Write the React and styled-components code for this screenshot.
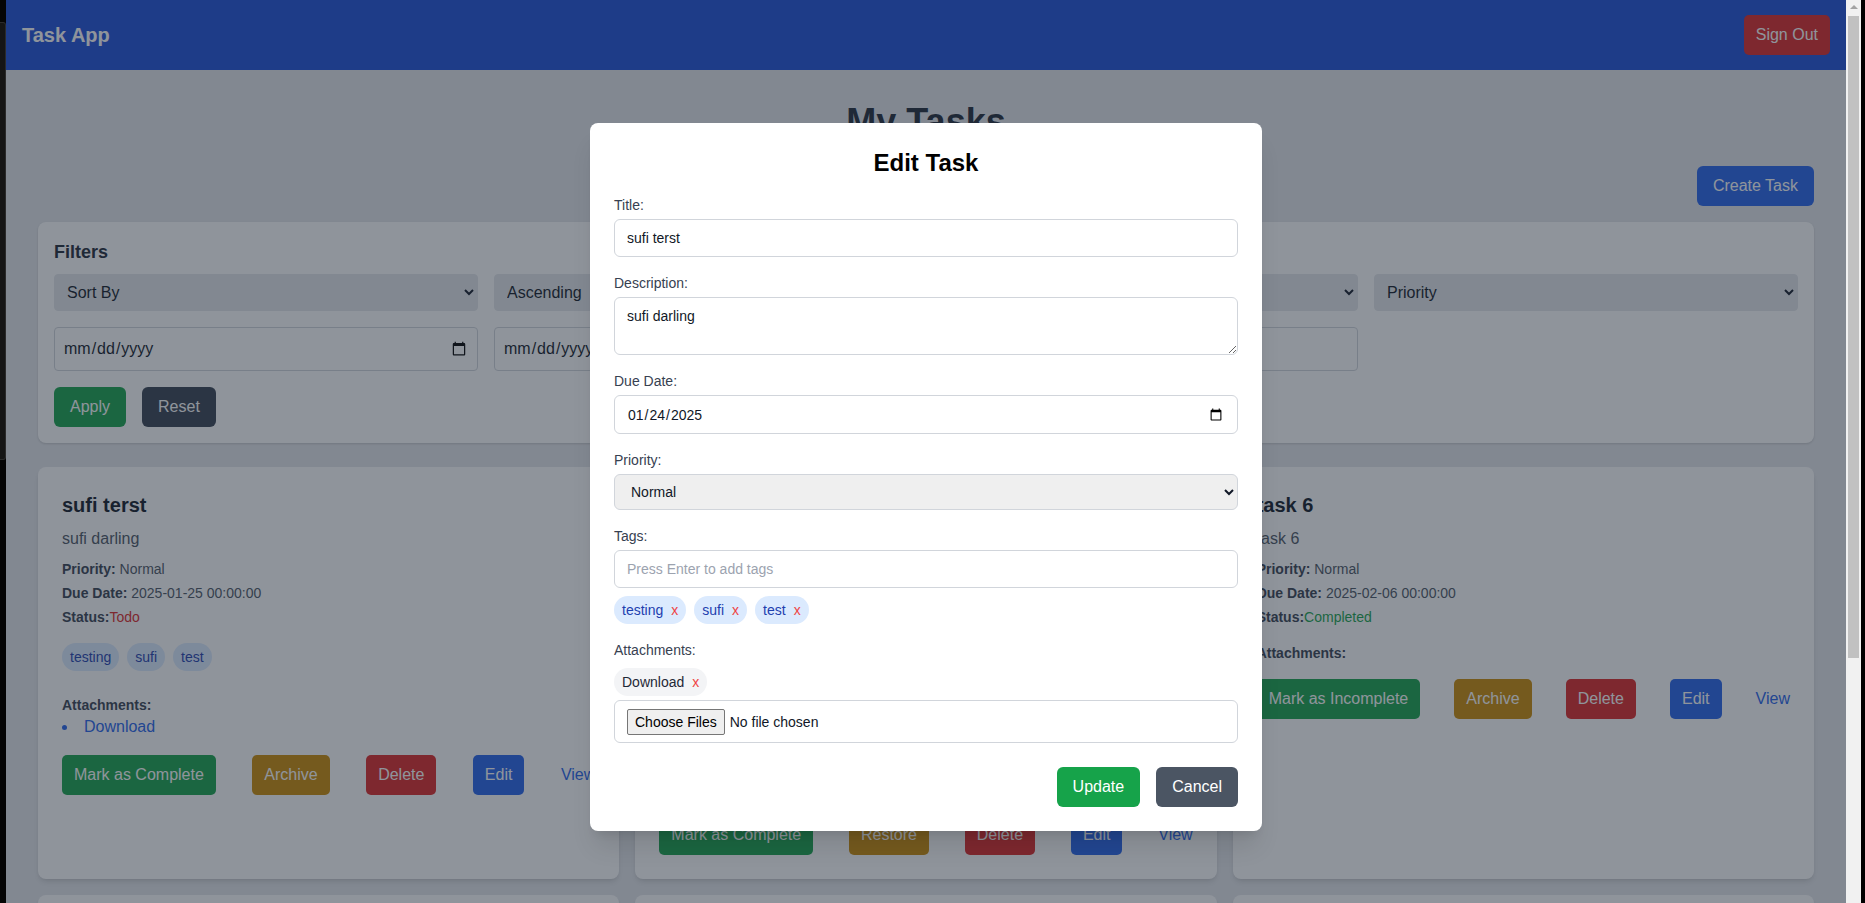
import React from "react";
import styled, { createGlobalStyle, css } from "styled-components";

const FONT = `"Liberation Sans", Arial, Helvetica, sans-serif`;

const GlobalStyle = createGlobalStyle`
  *, *::before, *::after { box-sizing: border-box; }
  html, body { margin: 0; padding: 0; background: #000; }
  body { font-family: ${FONT}; color: #111827; overflow: hidden; }
  button, input, select, textarea { font-family: ${FONT}; }
`;

const TONES = {
  green: "#16a34a",
  yellow: "#ca8a04",
  red: "#dc2626",
  blue: "#2563eb",
  dark: "#374151",
  slate: "#4b5563",
};

/* ---------- window frame ---------- */
const Frame = styled.div`
  display: flex;
  width: 1865px;
  height: 903px;
  overflow: hidden;
  background: #000;
`;
const Bezel = styled.div`
  flex: none;
  width: 6px;
  background: #050505;
  padding-top: 22px;
`;
const BezelWindow = styled.div`
  height: 438px;
  border: 1px solid #2b2b2b;
  border-left: 0;
  border-radius: 0 3px 3px 0;
  background: #151515;
`;
const Viewport = styled.div`
  position: relative;
  flex: none;
  width: 1840px;
  height: 903px;
  overflow: hidden;
  background: #e5e7eb;
`;
const Scrollbar = styled.div`
  flex: none;
  width: 15px;
  background: #f1f1f1;
  display: flex;
  flex-direction: column;
  align-items: center;
`;
const ScrollArrow = styled.div`
  width: 0;
  height: 0;
  margin: 5px 0 7px;
  border-left: 4px solid transparent;
  border-right: 4px solid transparent;
  border-bottom: 4px solid #a3a3a3;
`;
const ScrollThumb = styled.div`
  width: 11px;
  height: 642px;
  background: #c1c1c1;
`;
const EdgeStrip = styled.div`
  flex: none;
  width: 4px;
  background: #000;
`;

/* ---------- page ---------- */
const Header = styled.header`
  height: 70px;
  background: #1d4ed8;
  display: flex;
  align-items: center;
  justify-content: space-between;
  padding: 0 16px;
`;
const Brand = styled.h1`
  margin: 0;
  font-size: 20px;
  line-height: 28px;
  font-weight: 700;
  color: #fff;
`;
const Button = styled.button`
  border: 0;
  cursor: pointer;
  color: #fff;
  font-size: 16px;
  line-height: 24px;
  padding: 8px ${(p) => p.$px ?? 16}px;
  border-radius: ${(p) => p.$radius ?? 6}px;
  background: ${(p) => TONES[p.$tone]};
  white-space: nowrap;
`;
const Main = styled.main`
  padding: 32px;
`;
const PageTitle = styled.h2`
  margin: 0 0 24px;
  text-align: center;
  font-size: 36px;
  line-height: 40px;
  font-weight: 700;
  color: #1f2937;
`;
const TopActions = styled.div`
  display: flex;
  justify-content: flex-end;
  margin-bottom: 16px;
`;
const Panel = styled.section`
  background: #fff;
  border-radius: 8px;
  box-shadow: 0 1px 3px rgba(0, 0, 0, 0.1), 0 1px 2px rgba(0, 0, 0, 0.06);
  padding: 16px;
  margin-bottom: 24px;
`;
const PanelTitle = styled.h3`
  margin: 0 0 8px;
  font-size: 18px;
  line-height: 28px;
  font-weight: 700;
  color: #1f2937;
`;
const FilterGrid = styled.div`
  display: grid;
  grid-template-columns: repeat(4, minmax(0, 1fr));
  gap: 16px;
`;
const FilterSelect = styled.select`
  width: 100%;
  height: 37px;
  padding: 0 8px;
  font-size: 16px;
  color: #111827;
  background: #e5e7eb;
  border: 1px solid #e5e7eb;
  border-radius: 4px;
`;
const FilterField = styled.input`
  width: 100%;
  height: 44px;
  padding: 8px;
  font-size: 16px;
  color: #111827;
  background: #fff;
  border: 1px solid #d1d5db;
  border-radius: 4px;
`;
const FilterActions = styled.div`
  display: flex;
  gap: 16px;
  margin-top: 16px;
`;

/* ---------- task cards ---------- */
const TaskGrid = styled.div`
  display: grid;
  grid-template-columns: repeat(3, minmax(0, 1fr));
  gap: 16px;
`;
const Card = styled.article`
  background: #fff;
  border-radius: 8px;
  box-shadow: 0 4px 6px -1px rgba(0, 0, 0, 0.1), 0 2px 4px -2px rgba(0, 0, 0, 0.1);
  padding: 24px;
  display: flex;
  flex-direction: column;
`;
const CardTitle = styled.h3`
  margin: 0 0 8px;
  font-size: 20px;
  line-height: 28px;
  font-weight: 700;
  color: #111827;
`;
const CardDesc = styled.p`
  margin: 0 0 8px;
  font-size: 16px;
  line-height: 24px;
  color: #4b5563;
`;
const Detail = styled.p`
  margin: 0 0 4px;
  font-size: 14px;
  line-height: 20px;
  color: #4b5563;
  strong {
    color: #374151;
    font-weight: 700;
  }
`;
const StatusText = styled.span`
  color: ${(p) => (p.$done ? "#16a34a" : "#dc2626")};
`;
const TagList = styled.div`
  display: flex;
  flex-wrap: wrap;
  gap: 8px;
  margin: 12px 0;
`;
const Tag = styled.span`
  padding: 4px 8px;
  border-radius: 9999px;
  font-size: 14px;
  line-height: 20px;
  background: #dbeafe;
  color: #1e40af;
`;
const AttachHeading = styled.h4`
  margin: 12px 0 0;
  font-size: 14px;
  line-height: 20px;
  font-weight: 700;
  color: #374151;
`;
const AttachList = styled.ul`
  margin: 0;
  padding: 0;
  list-style: disc inside;
  font-size: 16px;
  line-height: 24px;
  color: #2563eb;
`;
const LinkText = styled.a`
  color: #2563eb;
  text-decoration: none;
  font-size: 16px;
  line-height: 24px;
`;
const CardActions = styled.div`
  display: flex;
  justify-content: space-between;
  align-items: center;
  margin-top: 16px;
`;

/* ---------- modal ---------- */
const Overlay = styled.div`
  position: absolute;
  inset: 0;
  background: rgba(31, 41, 55, 0.5);
  display: flex;
  justify-content: center;
  align-items: flex-start;
  padding-top: 123px;
`;
const Modal = styled.form`
  width: 672px;
  background: #fff;
  border-radius: 8px;
  padding: 24px;
  box-shadow: 0 20px 25px -5px rgba(0, 0, 0, 0.1), 0 8px 10px -6px rgba(0, 0, 0, 0.1);
`;
const ModalTitle = styled.h2`
  margin: 0 0 16px;
  text-align: center;
  font-size: 24px;
  line-height: 32px;
  font-weight: 700;
  color: #000;
`;
const Field = styled.div`
  margin-bottom: ${(p) => (p.$last ? 0 : 16)}px;
`;
const Label = styled.label`
  display: block;
  margin-bottom: 4px;
  font-size: 14px;
  line-height: 20px;
  color: #374151;
`;
const controlBase = css`
  display: block;
  width: 100%;
  border: 1px solid #d1d5db;
  border-radius: 6px;
  font-size: 14px;
  line-height: 20px;
  color: #111827;
  background: #fff;
`;
const TextInput = styled.input`
  ${controlBase};
  height: 38px;
  padding: 8px 12px;
  &::placeholder {
    color: #9ca3af;
  }
`;
const TextArea = styled.textarea`
  ${controlBase};
  height: 58px;
  padding: 8px 12px;
  resize: vertical;
`;
const DateInput = styled.input`
  ${controlBase};
  height: 39px;
  padding: 0 12px;
`;
const Select = styled.select`
  ${controlBase};
  height: 36px;
  padding: 0 12px;
  background: #efefef;
`;
const ChipRow = styled.div`
  display: flex;
  flex-wrap: wrap;
  gap: 8px;
  margin-top: 8px;
`;
const Chip = styled.span`
  display: inline-flex;
  align-items: center;
  gap: 8px;
  padding: 4px 8px;
  border-radius: 9999px;
  font-size: 14px;
  line-height: 20px;
  background: ${(p) => (p.$file ? "#f3f4f6" : "#dbeafe")};
  color: ${(p) => (p.$file ? "#1f2937" : "#1e40af")};
`;
const RemoveButton = styled.button`
  padding: 0;
  border: 0;
  background: none;
  font-size: 14px;
  line-height: 20px;
  color: #ef4444;
  cursor: pointer;
`;
const FilePicker = styled.input`
  ${controlBase};
  margin-top: 4px;
  height: 43px;
  padding: 8px 12px;
  &::file-selector-button {
    margin-right: 5px;
    padding: 4px 7px;
    font: 14px ${FONT};
    color: #000;
    background: #efefef;
    border: 1px solid #767676;
    border-radius: 2px;
  }
`;
const ModalActions = styled.div`
  display: flex;
  justify-content: flex-end;
  gap: 16px;
  margin-top: 24px;
`;

/* ---------- data ---------- */
const tasks = [
  {
    title: "sufi terst",
    desc: "sufi darling",
    due: "2025-01-25 00:00:00",
    status: "Todo",
    tags: ["testing", "sufi", "test"],
    files: 1,
    archived: false,
  },
  {
    title: "task 5",
    desc: "task 5",
    due: "2025-02-01 00:00:00",
    status: "Todo",
    tags: ["frontend", "backend", "design", "review", "urgent", "meeting", "docs", "research", "planning"],
    files: 2,
    archived: true,
  },
  {
    title: "task 6",
    desc: "task 6",
    due: "2025-02-06 00:00:00",
    status: "Completed",
    tags: [],
    files: 0,
    archived: false,
  },
  {
    title: "task 7",
    desc: "task 7",
    due: "2025-02-10 00:00:00",
    status: "Todo",
    tags: [],
    files: 0,
    archived: false,
  },
  {
    title: "task 8",
    desc: "task 8",
    due: "2025-02-12 00:00:00",
    status: "Todo",
    tags: [],
    files: 0,
    archived: false,
  },
  {
    title: "task 9",
    desc: "task 9",
    due: "2025-02-14 00:00:00",
    status: "Todo",
    tags: [],
    files: 0,
    archived: false,
  },
];

function TaskCard({ task }) {
  const done = task.status === "Completed";
  return (
    <Card>
      <CardTitle>{task.title}</CardTitle>
      <CardDesc>{task.desc}</CardDesc>
      <Detail>
        <strong>Priority:</strong> Normal
      </Detail>
      <Detail>
        <strong>Due Date:</strong> {task.due}
      </Detail>
      <Detail>
        <strong>Status:</strong>
        <StatusText $done={done}>{task.status}</StatusText>
      </Detail>
      {task.tags.length > 0 && (
        <TagList>
          {task.tags.map((t) => (
            <Tag key={t}>{t}</Tag>
          ))}
        </TagList>
      )}
      <AttachHeading>Attachments:</AttachHeading>
      <AttachList>
        {Array.from({ length: task.files }).map((_, i) => (
          <li key={i}>
            <LinkText href="#">Download</LinkText>
          </li>
        ))}
      </AttachList>
      <CardActions>
        <Button type="button" $tone="green" $px={12} $radius={5}>
          {done ? "Mark as Incomplete" : "Mark as Complete"}
        </Button>
        <Button type="button" $tone="yellow" $px={12} $radius={5}>
          {task.archived ? "Restore" : "Archive"}
        </Button>
        <Button type="button" $tone="red" $px={12} $radius={5}>
          Delete
        </Button>
        <Button type="button" $tone="blue" $px={12} $radius={5}>
          Edit
        </Button>
        <LinkText href="#">View</LinkText>
      </CardActions>
    </Card>
  );
}

export default function App() {
  return (
    <>
      <GlobalStyle />
      <Frame>
        <Bezel>
          <BezelWindow />
        </Bezel>
        <Viewport>
          <Header>
            <Brand>Task App</Brand>
            <Button type="button" $tone="red" $px={12} $radius={5}>
              Sign Out
            </Button>
          </Header>
          <Main>
            <PageTitle>My Tasks</PageTitle>
            <TopActions>
              <Button type="button" $tone="blue">
                Create Task
              </Button>
            </TopActions>
            <Panel>
              <PanelTitle>Filters</PanelTitle>
              <FilterGrid>
                <FilterSelect defaultValue="">
                  <option value="">Sort By</option>
                </FilterSelect>
                <FilterSelect defaultValue="asc">
                  <option value="asc">Ascending</option>
                </FilterSelect>
                <FilterSelect defaultValue="">
                  <option value="">Status</option>
                </FilterSelect>
                <FilterSelect defaultValue="">
                  <option value="">Priority</option>
                </FilterSelect>
                <FilterField type="date" />
                <FilterField type="date" />
                <FilterField type="text" placeholder="Search" />
              </FilterGrid>
              <FilterActions>
                <Button type="button" $tone="green">
                  Apply
                </Button>
                <Button type="button" $tone="dark">
                  Reset
                </Button>
              </FilterActions>
            </Panel>
            <TaskGrid>
              {tasks.map((t) => (
                <TaskCard key={t.title} task={t} />
              ))}
            </TaskGrid>
          </Main>

          <Overlay>
            <Modal onSubmit={(e) => e.preventDefault()}>
              <ModalTitle>Edit Task</ModalTitle>
              <Field>
                <Label>Title:</Label>
                <TextInput type="text" defaultValue="sufi terst" />
              </Field>
              <Field>
                <Label>Description:</Label>
                <TextArea defaultValue="sufi darling" />
              </Field>
              <Field>
                <Label>Due Date:</Label>
                <DateInput type="date" defaultValue="2025-01-24" />
              </Field>
              <Field>
                <Label>Priority:</Label>
                <Select defaultValue="normal">
                  <option value="low">Low</option>
                  <option value="normal">Normal</option>
                  <option value="high">High</option>
                </Select>
              </Field>
              <Field>
                <Label>Tags:</Label>
                <TextInput type="text" placeholder="Press Enter to add tags" />
                <ChipRow>
                  {["testing", "sufi", "test"].map((t) => (
                    <Chip key={t}>
                      {t}
                      <RemoveButton type="button">x</RemoveButton>
                    </Chip>
                  ))}
                </ChipRow>
              </Field>
              <Field $last>
                <Label>Attachments:</Label>
                <ChipRow>
                  <Chip $file>
                    Download
                    <RemoveButton type="button">x</RemoveButton>
                  </Chip>
                </ChipRow>
                <FilePicker type="file" multiple />
              </Field>
              <ModalActions>
                <Button type="submit" $tone="green">
                  Update
                </Button>
                <Button type="button" $tone="slate">
                  Cancel
                </Button>
              </ModalActions>
            </Modal>
          </Overlay>
        </Viewport>
        <Scrollbar>
          <ScrollArrow />
          <ScrollThumb />
        </Scrollbar>
        <EdgeStrip />
      </Frame>
    </>
  );
}
